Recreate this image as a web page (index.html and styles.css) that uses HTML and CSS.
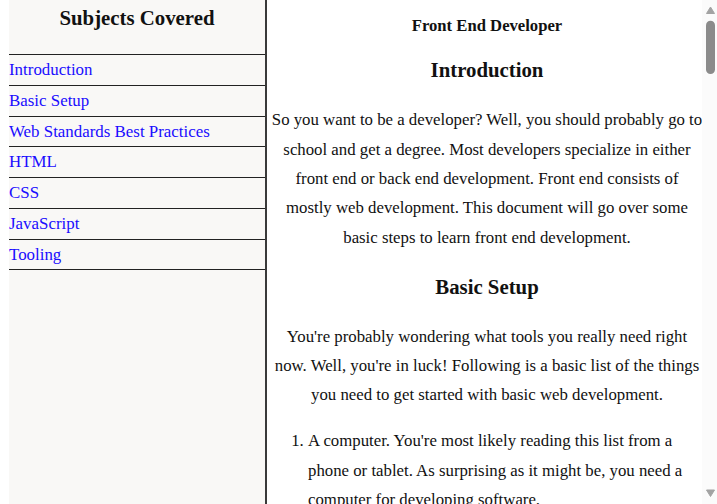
FILE: index.html
```html
<!DOCTYPE html>
<html lang="en">
<head>
<meta charset="utf-8">
<title>Front End Developer</title>
<link rel="stylesheet" href="styles.css">
</head>
<body>
<nav id="navbar" class="navbar">
  <header class="nav-header">Subjects Covered</header>
  <ul class="nav-list">
    <li><a class="nav-link" href="#Introduction">Introduction</a></li>
    <li><a class="nav-link" href="#Basic_Setup">Basic Setup</a></li>
    <li><a class="nav-link" href="#Web_Standards_Best_Practices">Web Standards Best Practices</a></li>
    <li><a class="nav-link" href="#HTML">HTML</a></li>
    <li><a class="nav-link" href="#CSS">CSS</a></li>
    <li><a class="nav-link" href="#JavaScript">JavaScript</a></li>
    <li><a class="nav-link" href="#Tooling">Tooling</a></li>
  </ul>
</nav>
<main id="main-doc" class="main-doc">
  <header class="doc-title">Front End Developer</header>

  <section class="main-section" id="Introduction">
    <h2 class="section-title">Introduction</h2>
    <p>So you want to be a developer? Well, you should probably go to school and get a degree. Most developers specialize in either front end or back end development. Front end consists of mostly web development. This document will go over some basic steps to learn front end development.</p>
  </section>

  <section class="main-section" id="Basic_Setup">
    <h2 class="section-title">Basic Setup</h2>
    <p>You're probably wondering what tools you really need right now. Well, you're in luck! Following is a basic list of the things you need to get started with basic web development.</p>
    <ol class="steps">
      <li>A computer. You're most likely reading this list from a phone or tablet. As surprising as it might be, you need a computer for developing software.</li>
      <li>A text editor. Any plain text editor will do, but an editor made for code will highlight your syntax and help you catch mistakes early.</li>
      <li>A web browser. Every modern browser ships with developer tools that let you inspect pages, debug scripts and test layouts.</li>
      <li>Patience. Learning to build for the web takes time, so practice a little every day and keep building small projects.</li>
    </ol>
  </section>

  <section class="main-section" id="Web_Standards_Best_Practices">
    <h2 class="section-title">Web Standards Best Practices</h2>
    <p>Web standards are the rules and guidelines set by the World Wide Web Consortium. Following them makes sure that your pages work in every browser, on every device, and for every visitor, including people who use assistive technology.</p>
    <p>Write valid markup, keep your content separate from its presentation, and test your pages early and often. Small habits like these save a lot of time later on.</p>
    <ul class="points">
      <li>Use semantic elements for their meaning.</li>
      <li>Provide text alternatives for images.</li>
      <li>Keep your styles in a separate stylesheet.</li>
      <li>Make every feature usable from the keyboard.</li>
    </ul>
  </section>

  <section class="main-section" id="HTML">
    <h2 class="section-title">HTML</h2>
    <p>HTML stands for HyperText Markup Language. It is the backbone of every web page and describes the structure of the content: headings, paragraphs, lists, links, images and forms.</p>
    <code class="snippet">&lt;h1&gt;Hello, world!&lt;/h1&gt;
&lt;p&gt;This is my first web page.&lt;/p&gt;</code>
    <p>Each element is written with an opening tag and a closing tag. Attributes add extra information to an element, such as the address of a link or the source of an image.</p>
    <p>Once you are comfortable with the basic elements, learn about forms, tables and the many semantic elements such as header, nav, main, section and footer.</p>
  </section>

  <section class="main-section" id="CSS">
    <h2 class="section-title">CSS</h2>
    <p>CSS stands for Cascading Style Sheets. It controls how your HTML looks: colors, fonts, spacing and the layout of the whole page. A stylesheet is made of rules, and each rule has a selector and a list of declarations.</p>
    <code class="snippet">p {
  color: navy;
  line-height: 1.5;
}</code>
    <p>Modern CSS gives you powerful layout tools such as flexbox and grid. Learn them well, together with media queries, so that your pages look great on small phones and large screens alike.</p>
    <p>Take the time to understand the cascade, specificity and inheritance. Most confusing styling problems come from one of these three ideas.</p>
  </section>

  <section class="main-section" id="JavaScript">
    <h2 class="section-title">JavaScript</h2>
    <p>JavaScript is the programming language of the web. It lets you respond to what the user does, change the page on the fly, and talk to servers without reloading the page.</p>
    <code class="snippet">const greet = name =&gt; `Hello, ${name}!`;
console.log(greet("developer"));</code>
    <p>Start with variables, functions, arrays and objects. Then move on to the DOM, events and asynchronous code with promises and async functions.</p>
    <p>Practice by building small interactive projects such as a calculator, a to-do list or a simple quiz game.</p>
  </section>

  <section class="main-section" id="Tooling">
    <h2 class="section-title">Tooling</h2>
    <p>As your projects grow you will want some tools to help you. Version control with Git keeps a history of your work, and a package manager such as npm lets you install libraries written by other developers.</p>
    <p>Build tools bundle and optimize your files, linters catch mistakes before they reach the browser, and formatters keep your code tidy and consistent.</p>
    <p>Do not try to learn every tool at once. Pick up each one when you feel the need for it, and focus on the fundamentals first.</p>
  </section>
</main>
<div class="scrollbar" aria-hidden="true">
  <svg width="15" height="504" viewBox="0 0 15 504">
    <polygon points="8.5,7 4.5,13.5 12.5,13.5" fill="#a3a3a3" stroke="#a3a3a3" stroke-width="1" stroke-linejoin="round"/>
    <rect x="4" y="20.7" width="9" height="53.3" rx="4.5" fill="#8b8b8b"/>
    <polygon points="4.5,490 12.5,490 8.5,496.5" fill="#a3a3a3" stroke="#a3a3a3" stroke-width="1" stroke-linejoin="round"/>
  </svg>
</div>
</body>
</html>
```

FILE: styles.css
```css
html, body {
  margin: 0;
  padding: 0;
}

body {
  font-family: "Liberation Serif", "Times New Roman", serif;
  font-size: 16.8px;
  color: #111;
  background: #ffffff;
}

.navbar {
  position: fixed;
  top: 0;
  left: 9px;
  width: 256px;
  height: 100%;
  background: #f9f8f6;
  border-right: 2px solid #3a3a3a;
}

.nav-header {
  font-weight: bold;
  font-size: 20.8px;
  text-align: center;
  line-height: 36px;
  height: 54px;
}

.nav-list {
  list-style: none;
  margin: 0;
  padding: 0;
}

.nav-list li {
  border-top: 1px solid #222;
}

.nav-list li:last-child {
  border-bottom: 1px solid #222;
}

.nav-link {
  display: block;
  font-size: 16.9px;
  line-height: 29.76px;
  color: #1a0dff;
  text-decoration: none;
}

.main-doc {
  margin-left: 271.5px;
  margin-right: 14.5px;
  padding-bottom: 40px;
  text-align: center;
  line-height: 29.4px;
}

.doc-title {
  font-weight: bold;
  font-size: 16.67px;
  line-height: 29.4px;
  padding-top: 11px;
}

.section-title {
  font-size: 20.8px;
  line-height: 36px;
  margin: 12px 0 16.8px;
}

.main-section p {
  margin: 16.5px 0;
}

.steps,
.points {
  text-align: left;
  margin: 16.5px 0;
  padding-left: 36.5px;
}

.snippet {
  display: block;
  white-space: pre;
  text-align: left;
  font-family: "Liberation Mono", monospace;
  font-size: 14px;
  background: #f2f2f2;
  padding: 8px 12px;
  margin: 0 16px;
}

.scrollbar {
  position: fixed;
  top: 0;
  right: 0;
  width: 15px;
  height: 100%;
  background: #fbfbfb;
}

.scrollbar svg {
  display: block;
}
```
